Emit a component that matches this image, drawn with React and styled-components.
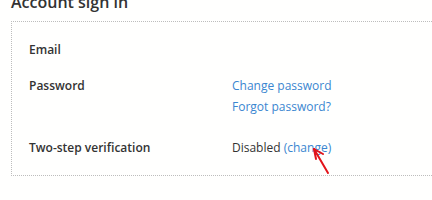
import React from 'react';
import styled, { createGlobalStyle } from 'styled-components';

const GlobalStyle = createGlobalStyle`
  html, body {
    margin: 0;
    padding: 0;
    background: #fffffe;
    overflow: hidden;
  }
  body {
    font-family: "Open Sans", "Liberation Sans", sans-serif;
    color: #333;
  }
`;

const Page = styled.div`
  position: relative;
  width: 432px;
  height: 200px;
  padding-left: 11px;
  box-sizing: border-box;
`;

const Title = styled.h2`
  margin: -9px 0 0;
  font-size: 16px;
  line-height: 22px;
  font-weight: 600;
  color: #333;
`;

const Panel = styled.div`
  margin-top: 8px;
  margin-right: -20px;
  border: 1px dotted #bdbdbd;
  padding: 17px 0 17px 17px;
`;

const Row = styled.div`
  display: grid;
  grid-template-columns: 203px 1fr;
  margin-top: ${(p) => p.$gap || 0}px;
  font-size: 12px;
  line-height: 21px;
`;

const Label = styled.div`
  font-weight: 600;
  color: #333;
`;

const Value = styled.div`
  display: flex;
  flex-direction: column;
  color: #333;
`;

const Link = styled.a`
  color: #3a86d0;
  text-decoration: none;
  cursor: pointer;
`;

const Arrow = styled.svg`
  position: absolute;
  left: 306px;
  top: 152px;
`;

export default function App() {
  return (
    <>
      <GlobalStyle />
      <Page>
        <Title>Account sign in</Title>
        <Panel>
          <Row>
            <Label>Email</Label>
            <Value />
          </Row>
          <Row $gap={15}>
            <Label>Password</Label>
            <Value>
              <Link>Change password</Link>
              <Link>Forgot password?</Link>
            </Value>
          </Row>
          <Row $gap={20}>
            <Label>Two-step verification</Label>
            <Value>
              <span>
                Disabled <Link>(change)</Link>
              </span>
            </Value>
          </Row>
        </Panel>
        <Arrow width="30" height="36" viewBox="0 0 30 36">
          <g stroke="#e3131a" strokeWidth="2" strokeLinecap="round" fill="none">
            <line x1="22" y1="30" x2="8" y2="6" />
            <line x1="8" y1="6" x2="17" y2="11" />
            <line x1="8" y1="6" x2="10" y2="16" />
          </g>
        </Arrow>
      </Page>
    </>
  );
}
